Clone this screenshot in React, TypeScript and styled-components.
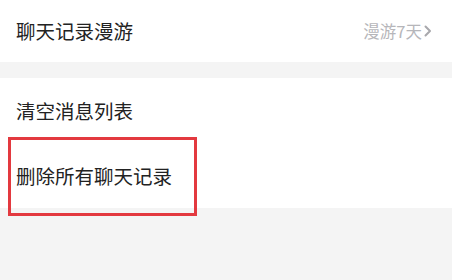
import * as React from 'react';
import styled, { createGlobalStyle } from 'styled-components';

const Global = createGlobalStyle`
    html, body {
        margin: 0;
        padding: 0;
        background: #f4f4f4;
        font-family: "Noto Sans CJK SC", "Noto Sans", sans-serif;
    }
`;

const Page = styled.div`
    width: 452px;
    height: 280px;
    background: #f4f4f4;
    overflow: hidden;
`;

const Group = styled.div<{ $gap?: number }>`
    background: #ffffff;
    margin-bottom: ${ (props) => props.$gap || 0 }px;
`;

const Row = styled.div<{ $height: number }>`
    position: relative;
    display: flex;
    align-items: center;
    justify-content: space-between;
    height: ${ (props) => props.$height }px;
    padding: 0 20px 0 16px;
    box-sizing: border-box;
`;

const Label = styled.div`
    font-size: 19.5px;
    color: #222222;
    line-height: 1;
`;

const Extra = styled.div`
    display: flex;
    align-items: center;
    gap: 2px;
    font-size: 16.5px;
    color: #b6b6ba;
    line-height: 1;
`;

const Highlight = styled.div`
    position: absolute;
    left: 8px;
    top: -6px;
    width: 189px;
    height: 79px;
    box-sizing: border-box;
    border: 3px solid #e3393f;
    pointer-events: none;
`;

const Chevron: React.FC = () => (
    <svg width="8" height="12" viewBox="0 0 8 12">
        <polyline points="1.5,1.5 6,6 1.5,10.5" fill="none" stroke="#a8a8ac" strokeWidth="2" strokeLinecap="round" strokeLinejoin="round" />
    </svg>
);

const App: React.FC = () => {
    return (
        <Page>
            <Global />
            <Group $gap={ 16 }>
                <Row $height={ 62 }>
                    <Label>聊天记录漫游</Label>
                    <Extra>
                        漫游7天
                        <Chevron />
                    </Extra>
                </Row>
            </Group>
            <Group>
                <Row $height={ 65 }>
                    <Label>清空消息列表</Label>
                </Row>
                <Row $height={ 65 }>
                    <Label>删除所有聊天记录</Label>
                    <Highlight />
                </Row>
            </Group>
        </Page>
    );
};

export default App;
